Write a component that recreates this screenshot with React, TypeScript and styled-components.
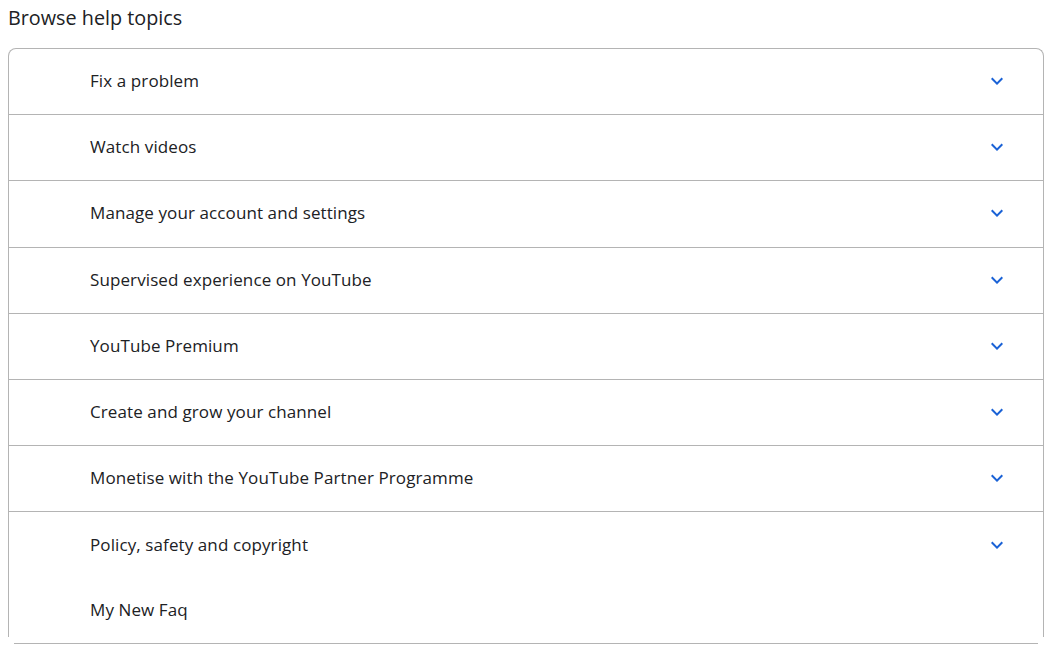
import React from "react";
import styled, { createGlobalStyle } from "styled-components";

const Global = createGlobalStyle`
  html, body { margin: 0; padding: 0; background: #ffffff; }
  body { font-family: "Open Sans", "Noto Sans", Arial, sans-serif; color: #202124; }
`;

const Page = styled.div`
  padding: 0 8px;
  width: 1036px;
`;

const Title = styled.h2`
  margin: 0;
  height: 36px;
  display: flex;
  align-items: center;
  font-size: 19.8px;
  font-weight: 400;
  color: #202124;
  padding-bottom: 2px;
  box-sizing: border-box;
`;

const Card = styled.div`
  margin-top: 12px;
  border: 1px solid #b4b4b4;
  border-bottom: none;
  border-radius: 8px 8px 0 0;
  display: flex;
  flex-direction: column;
`;

const Row = styled.div<{ $divider: boolean; $last?: boolean }>`
  box-sizing: border-box;
  height: ${(p) => (p.$last ? "58.4px" : "66.2px")};
  display: flex;
  align-items: center;
  justify-content: space-between;
  padding: ${(p) => (p.$last ? "3px 34px 0 81px" : "0 34px 2px 81px")};
  border-bottom: ${(p) => (p.$divider ? "1px solid #b4b4b4" : "none")};
`;

const Label = styled.span`
  font-size: 17px;
  color: #202124;
  letter-spacing: 0.1px;
`;

const Chevron = styled.svg`
  width: 24px;
  height: 24px;
  fill: #1a62d6;
  flex: none;
  margin-top: 1px;
`;

const BottomEdge = styled.div`
  margin: 6px 6px 0;
  height: 0;
  border-top: 1px solid #b4b4b4;
`;

const topics: { label: string; chevron: boolean; divider: boolean }[] = [
  { label: "Fix a problem", chevron: true, divider: true },
  { label: "Watch videos", chevron: true, divider: true },
  { label: "Manage your account and settings", chevron: true, divider: true },
  { label: "Supervised experience on YouTube", chevron: true, divider: true },
  { label: "YouTube Premium", chevron: true, divider: true },
  { label: "Create and grow your channel", chevron: true, divider: true },
  { label: "Monetise with the YouTube Partner Programme", chevron: true, divider: true },
  { label: "Policy, safety and copyright", chevron: true, divider: false },
  { label: "My New Faq", chevron: false, divider: false },
];

export default function App() {
  return (
    <Page>
      <Global />
      <Title>Browse help topics</Title>
      <Card>
        {topics.map((t, i) => (
          <Row key={t.label} $divider={t.divider} $last={i === topics.length - 1}>
            <Label>{t.label}</Label>
            {t.chevron && (
              <Chevron viewBox="0 0 24 24" aria-hidden="true">
                <path d="M16.59 8.59L12 13.17 7.41 8.59 6 10l6 6 6-6z" />
              </Chevron>
            )}
          </Row>
        ))}
      </Card>
      <BottomEdge />
    </Page>
  );
}
